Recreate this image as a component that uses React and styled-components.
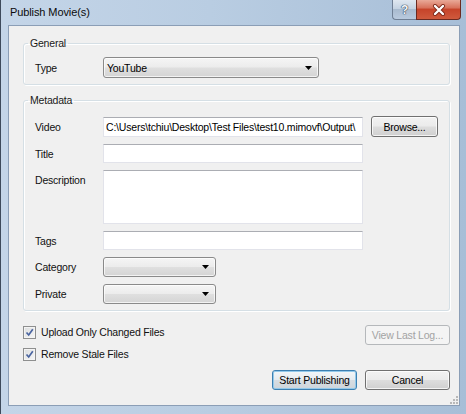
import React from 'react';
import styled, { createGlobalStyle } from 'styled-components';

const GlobalStyle = createGlobalStyle`
  html, body {
    margin: 0;
    padding: 0;
    background: #fff;
  }
  body {
    font-family: 'Liberation Sans', Arial, sans-serif;
    font-size: 10.5px;
    letter-spacing: -0.2px;
    color: #111;
  }
`;

const Window = styled.div`
  width: 466px;
  height: 414px;
  box-sizing: border-box;
  display: flex;
  flex-direction: column;
  background: linear-gradient(to right, #c4d5e8 0%, #b9cde2 45%, #a7bed7 100%);
  border-left: 1px solid #3e4a5b;
  overflow: hidden;
`;

const TitleBar = styled.div`
  height: 25px;
  flex: none;
  display: flex;
  align-items: flex-start;
  padding-left: 9px;
`;

const Caption = styled.div`
  font-size: 11px;
  letter-spacing: -0.1px;
  line-height: 24px;
  color: #0b0b0b;
`;

const HelpButton = styled.div`
  margin-left: auto;
  width: 24px;
  height: 20px;
  box-sizing: border-box;
  border: 1px solid #6f7f94;
  border-top: none;
  border-right: none;
  border-bottom-left-radius: 4px;
  background: linear-gradient(to bottom, #dfe7f0 0%, #c5d3e2 45%, #a9bbcf 50%, #b9cade 100%);
  display: flex;
  align-items: center;
  justify-content: center;
  font-weight: bold;
  font-size: 12px;
  color: #f4f6f9;
  text-shadow: 0 0 1px #35455a, 0 0 1px #35455a, 0 0 1px #35455a;
`;

const CloseButton = styled.div`
  width: 45px;
  height: 20px;
  margin-right: 5px;
  box-sizing: border-box;
  border: 1px solid #6b2a20;
  border-top: none;
  border-bottom-right-radius: 4px;
  background: linear-gradient(to bottom, #e9a998 0%, #d8735d 40%, #c6442a 50%, #cf5a3d 100%);
  display: flex;
  align-items: center;
  justify-content: center;
`;

const Client = styled.div`
  flex: 1;
  position: relative;
  margin: 0 6px 8px 7px;
  background: #f0f0f0;
  border: 1px solid #8b9eb6;
  padding: 10px 9px 0 14px;
  display: flex;
  flex-direction: column;
`;

const Group = styled.fieldset`
  margin: 0 0 ${(p) => p.$after || 0}px 0;
  padding: ${(p) => p.$top}px 0 ${(p) => p.$bottom}px 11px;
  border: 1px solid #d5dfe5;
  border-radius: 3px;
  min-width: 0;
  box-shadow: inset 1px 1px 0 #fff, 1px 1px 0 #fff;
`;

const Legend = styled.legend`
  line-height: 14px;
  padding: 0 2px;
  margin-left: -7px;
  color: #1a1a1a;
`;

const Rows = styled.div`
  display: flex;
  flex-direction: column;
  gap: 7px;
`;

const Row = styled.div`
  display: grid;
  grid-template-columns: 68px auto 1fr;
  align-items: ${(p) => (p.$top ? 'start' : 'center')};
`;

const Label = styled.div`
  padding-top: ${(p) => (p.$top ? 4 : 0)}px;
`;

const TextBox = styled.input`
  width: 260px;
  height: ${(p) => p.$h || 19}px;
  box-sizing: border-box;
  margin: 0;
  padding: 0 2px;
  border: 1px solid #e2e3ea;
  border-top-color: #abadb3;
  background: #fff;
  font: inherit;
  letter-spacing: inherit;
  color: #000;
  outline: none;
`;

const TextArea = styled.textarea`
  width: 260px;
  height: 54px;
  box-sizing: border-box;
  margin: 0;
  padding: 2px;
  border: 1px solid #e2e3ea;
  border-top-color: #abadb3;
  background: #fff;
  resize: none;
  font: inherit;
  outline: none;
`;

const Combo = styled.div`
  width: ${(p) => p.$w}px;
  height: ${(p) => p.$h || 20}px;
  box-sizing: border-box;
  border: 1px solid #8a8a8a;
  border-radius: 3px;
  background: linear-gradient(to bottom, #f5f5f5 0%, #ececec 48%, #dfdfdf 52%, #d4d4d4 100%);
  box-shadow: inset 0 0 0 1px rgba(255, 255, 255, 0.7);
  display: flex;
  align-items: center;
  padding: 0 6px 0 3px;
`;

const ComboText = styled.span`
  flex: 1;
  color: #000;
`;

const Button = styled.button`
  width: ${(p) => p.$w || 85}px;
  height: ${(p) => p.$h || 20}px;
  margin: 0 0 0 ${(p) => p.$gap || 0}px;
  padding: 0;
  box-sizing: border-box;
  font: inherit;
  letter-spacing: inherit;
  color: ${(p) => (p.disabled ? '#a3a3a3' : '#000')};
  border: 1px solid ${(p) => (p.$default ? '#3c7fb1' : p.disabled ? '#b5b8bb' : '#707070')};
  border-radius: 3px;
  background: ${(p) =>
    p.disabled
      ? '#f4f4f4'
      : p.$default
      ? 'linear-gradient(to bottom, #f3f6f8 0%, #e6ebef 48%, #d7dde2 52%, #ced5db 100%)'
      : 'linear-gradient(to bottom, #f2f2f2 0%, #ebebeb 48%, #dddddd 52%, #cfcfcf 100%)'};
  box-shadow: ${(p) =>
    p.$default ? 'inset 0 0 0 1px #93c9ea' : p.disabled ? 'none' : 'inset 0 0 0 1px rgba(255,255,255,0.75)'};
`;

const Bottom = styled.div`
  margin-top: 14px;
  display: flex;
  flex-direction: column;
`;

const CheckRow = styled.div`
  display: flex;
  align-items: flex-start;
  justify-content: space-between;
  margin-bottom: ${(p) => p.$after || 0}px;
`;

const Check = styled.label`
  display: flex;
  align-items: center;
  gap: 5px;
  padding-top: 1px;
  line-height: 13px;
`;

const Box = styled.span`
  width: 13px;
  height: 13px;
  box-sizing: border-box;
  border: 1px solid #8e8f8f;
  background: linear-gradient(135deg, #dcdedf 0%, #f6f6f6 100%);
  box-shadow: inset 0 0 0 1px #f4f4f4;
  display: flex;
  align-items: center;
  justify-content: center;
`;

const Actions = styled.div`
  display: flex;
  justify-content: flex-end;
  gap: 8px;
  margin-top: 9px;
`;

const Grip = styled.svg`
  position: absolute;
  right: 1px;
  bottom: 1px;
`;

const Arrow = () => (
  <svg width="7" height="4" viewBox="0 0 7 4">
    <path d="M0 0h7L3.5 4z" fill="#000" />
  </svg>
);

const Tick = () => (
  <svg width="9" height="9" viewBox="0 0 9 9">
    <path d="M1.5 4.5 L3.7 7 L7.8 1.3" fill="none" stroke="#4a64a0" strokeWidth="1.7" />
  </svg>
);

export default function App() {
  return (
    <Window>
      <GlobalStyle />
      <TitleBar>
        <Caption>Publish Movie(s)</Caption>
        <HelpButton>?</HelpButton>
        <CloseButton>
          <svg width="14" height="12" viewBox="0 0 14 12">
            <path d="M3 2 L11 10 M11 2 L3 10" stroke="#7a2516" strokeWidth="4" strokeLinecap="round" />
            <path d="M3 2 L11 10 M11 2 L3 10" stroke="#fff" strokeWidth="2.4" strokeLinecap="round" />
          </svg>
        </CloseButton>
      </TitleBar>

      <Client>
        <Group $top={7} $bottom={6} $after={8}>
          <Legend>General</Legend>
          <Row>
            <Label>Type</Label>
            <Combo $w={216} $h={21}>
              <ComboText>YouTube</ComboText>
              <Arrow />
            </Combo>
          </Row>
        </Group>

        <Group $top={9} $bottom={6}>
          <Legend>Metadata</Legend>
          <Rows>
            <Row>
              <Label>Video</Label>
              <TextBox
                $h={20}
                readOnly
                value={'C:\\Users\\tchiu\\Desktop\\Test Files\\test10.mimovf\\Output\\'}
              />
              <Button $w={67} $h={21} $gap={8}>Browse...</Button>
            </Row>
            <Row>
              <Label>Title</Label>
              <TextBox readOnly value="" />
            </Row>
            <Row $top>
              <Label $top>Description</Label>
              <TextArea readOnly value="" />
            </Row>
            <Row>
              <Label>Tags</Label>
              <TextBox readOnly value="" />
            </Row>
            <Row>
              <Label>Category</Label>
              <Combo $w={113}>
                <ComboText />
                <Arrow />
              </Combo>
            </Row>
            <Row>
              <Label>Private</Label>
              <Combo $w={113}>
                <ComboText />
                <Arrow />
              </Combo>
            </Row>
          </Rows>
        </Group>

        <Bottom>
          <CheckRow $after={2}>
            <Check>
              <Box><Tick /></Box>
              Upload Only Changed Files
            </Check>
            <Button disabled>View Last Log...</Button>
          </CheckRow>
          <CheckRow>
            <Check>
              <Box><Tick /></Box>
              Remove Stale Files
            </Check>
          </CheckRow>
          <Actions>
            <Button $default>Start Publishing</Button>
            <Button>Cancel</Button>
          </Actions>
        </Bottom>

        <Grip width="8" height="8" viewBox="0 0 8 8">
          {[[6, 0], [6, 3], [3, 3], [6, 6], [3, 6], [0, 6]].map(([x, y]) => (
            <rect key={`${x}-${y}`} x={x} y={y} width="2" height="2" fill="#b8b8b8" />
          ))}
        </Grip>
      </Client>
    </Window>
  );
}
